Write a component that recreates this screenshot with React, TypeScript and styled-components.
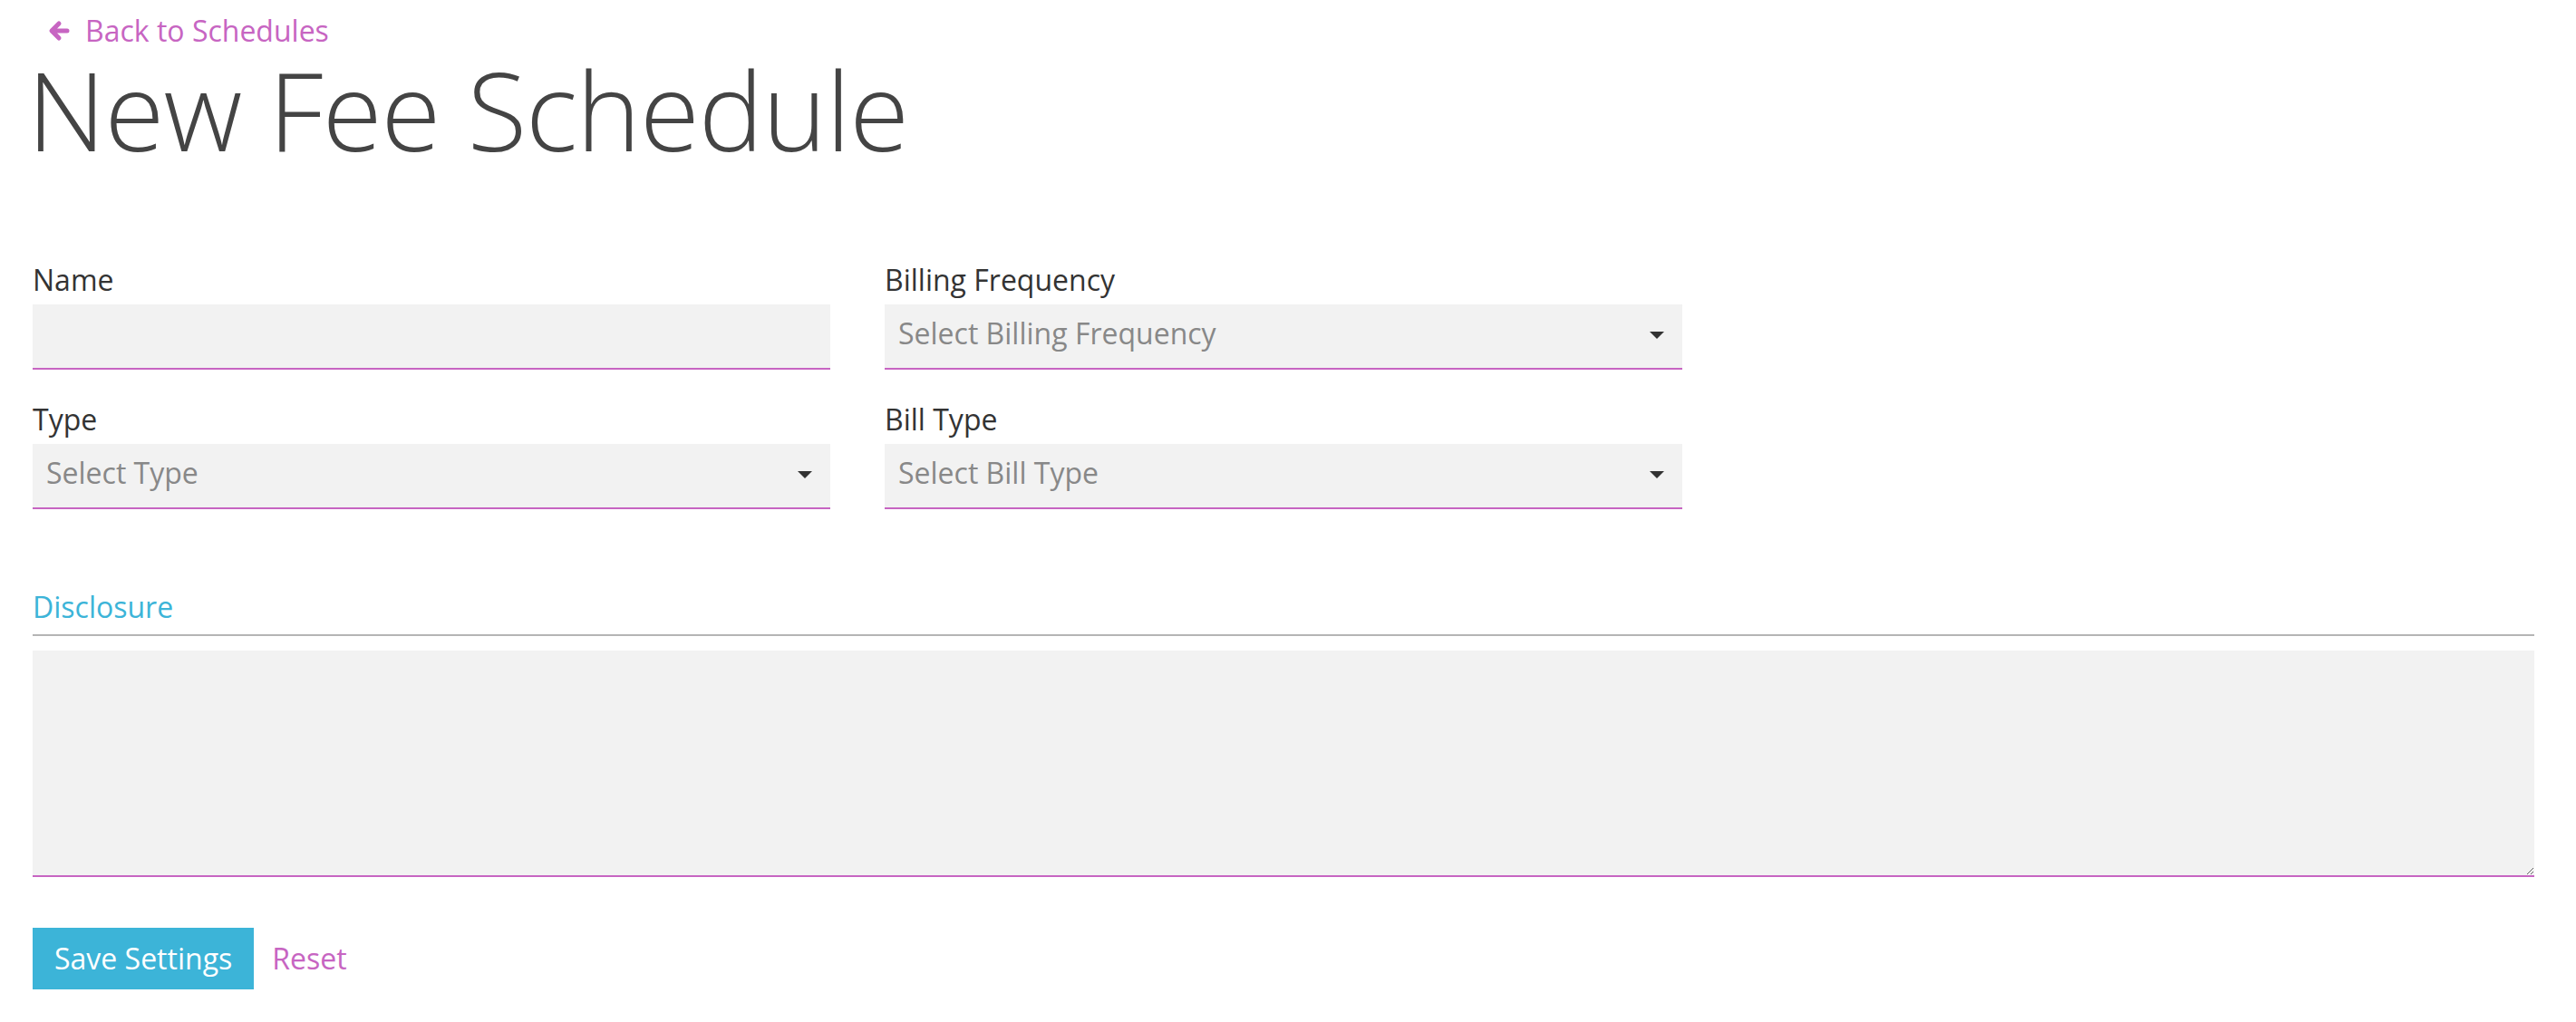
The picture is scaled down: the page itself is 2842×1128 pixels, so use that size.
import React from "react";
import styled, {createGlobalStyle} from "styled-components";

// ** Colors **
const PINK = "#c765c2";
const CYAN = "#3cb4d8";

// ** Global **
const GlobalStyle = createGlobalStyle`
    html, body {
        margin: 0;
        padding: 0;
        background: #fff;
    }
    body {
        font-family: "Open Sans", "Noto Sans", sans-serif;
        color: #333;
    }
    * {
        box-sizing: border-box;
    }
`

// ** Styled-Component **
const Page = styled.div`
    padding: 12px 46px 40px 36px;
`
const BackLink = styled.a`
    display: inline-flex;
    align-items: center;
    gap: 17px;
    margin-left: 17px;
    font-size: 32px;
    line-height: 44px;
    color: ${PINK};
    text-decoration: none;
    cursor: pointer;
`
const BackArrow = styled.svg`
    width: 24px;
    height: 24px;
    flex: none;
`
const Title = styled.h1`
    margin: 0 0 0 -6px;
    font-size: 120px;
    line-height: 130px;
    font-weight: 300;
    color: #444;
    letter-spacing: -1px;
`
const FieldGrid = styled.div`
    display: grid;
    grid-template-columns: 880px 880px;
    column-gap: 60px;
    row-gap: 33px;
    margin-top: 101px;
`
const Field = styled.div`
    display: flex;
    flex-direction: column;
`
const Label = styled.label`
    display: block;
    margin-bottom: 5px;
    font-size: 32px;
    line-height: 44px;
    color: #333;
`
const TextInput = styled.input`
    height: 72px;
    width: 100%;
    padding: 0 15px;
    border: none;
    border-bottom: 2px solid ${PINK};
    background: #f2f2f2;
    font-family: inherit;
    font-size: 32px;
    color: #333;
    outline: none;
`
const SelectWrap = styled.div`
    position: relative;
    width: 100%;
`
const Select = styled.select<{ empty: string }>`
    appearance: none;
    -webkit-appearance: none;
    display: block;
    width: 100%;
    height: 72px;
    padding: 10px 50px 16px 15px;
    border: none;
    border-radius: 0;
    border-bottom: 2px solid ${PINK};
    background: #f2f2f2;
    font-family: inherit;
    font-size: 32px;
    line-height: 44px;
    color: ${(props) => (props.empty === "true") ? '#888' : '#333'};
    outline: none;
    cursor: pointer;
`
const Caret = styled.svg`
    position: absolute;
    right: 20px;
    top: 30px;
    width: 16px;
    height: 8px;
    pointer-events: none;
`
const Section = styled.div`
    margin-top: 86px;
`
const SectionTitle = styled.div`
    padding-bottom: 8px;
    margin-bottom: 16px;
    border-bottom: 2px solid #b5b5b5;
    font-size: 32px;
    line-height: 44px;
    color: ${CYAN};
`
const TextArea = styled.textarea`
    display: block;
    width: 100%;
    height: 250px;
    padding: 10px 15px;
    border: none;
    border-radius: 0;
    border-bottom: 2px solid ${PINK};
    background: #f2f2f2;
    font-family: inherit;
    font-size: 32px;
    color: #333;
    outline: none;
`
const Actions = styled.div`
    display: flex;
    align-items: center;
    gap: 20px;
    margin-top: 56px;
`
const SaveBtn = styled.button`
    height: 68px;
    padding: 0 24px;
    border: none;
    background: ${CYAN};
    font-family: inherit;
    font-size: 32px;
    line-height: 44px;
    color: #fff;
    cursor: pointer;
`
const ResetLink = styled.a`
    font-size: 32px;
    line-height: 44px;
    color: ${PINK};
    text-decoration: none;
    cursor: pointer;
`

interface ISelectField {
    label: string;
    placeholder: string;
}

function SelectField({label, placeholder}: ISelectField) {
    return (
        <Field>
            <Label>{label}</Label>
            <SelectWrap>
                <Select empty="true" defaultValue="">
                    <option value="" disabled>{placeholder}</option>
                </Select>
                <Caret viewBox="0 0 16 8">
                    <path d="M0 0 L16 0 L8 8 Z" fill="#333"/>
                </Caret>
            </SelectWrap>
        </Field>
    );
}

function App() {
    return (
        <>
            <GlobalStyle/>
            <Page>
                <BackLink>
                    <BackArrow viewBox="0 0 24 24">
                        <path
                            d="M12 4 L4 12 L12 20 M4.5 12 L21 12"
                            fill="none"
                            stroke={PINK}
                            strokeWidth="5"
                            strokeLinecap="round"
                            strokeLinejoin="round"/>
                    </BackArrow>
                    <span>Back to Schedules</span>
                </BackLink>
                <Title>New Fee Schedule</Title>

                <FieldGrid>
                    <Field>
                        <Label>Name</Label>
                        <TextInput type="text"/>
                    </Field>
                    <SelectField label="Billing Frequency" placeholder="Select Billing Frequency"/>
                    <SelectField label="Type" placeholder="Select Type"/>
                    <SelectField label="Bill Type" placeholder="Select Bill Type"/>
                </FieldGrid>

                <Section>
                    <SectionTitle>Disclosure</SectionTitle>
                    <TextArea/>
                </Section>

                <Actions>
                    <SaveBtn>Save Settings</SaveBtn>
                    <ResetLink>Reset</ResetLink>
                </Actions>
            </Page>
        </>
    );
}

export default App;
